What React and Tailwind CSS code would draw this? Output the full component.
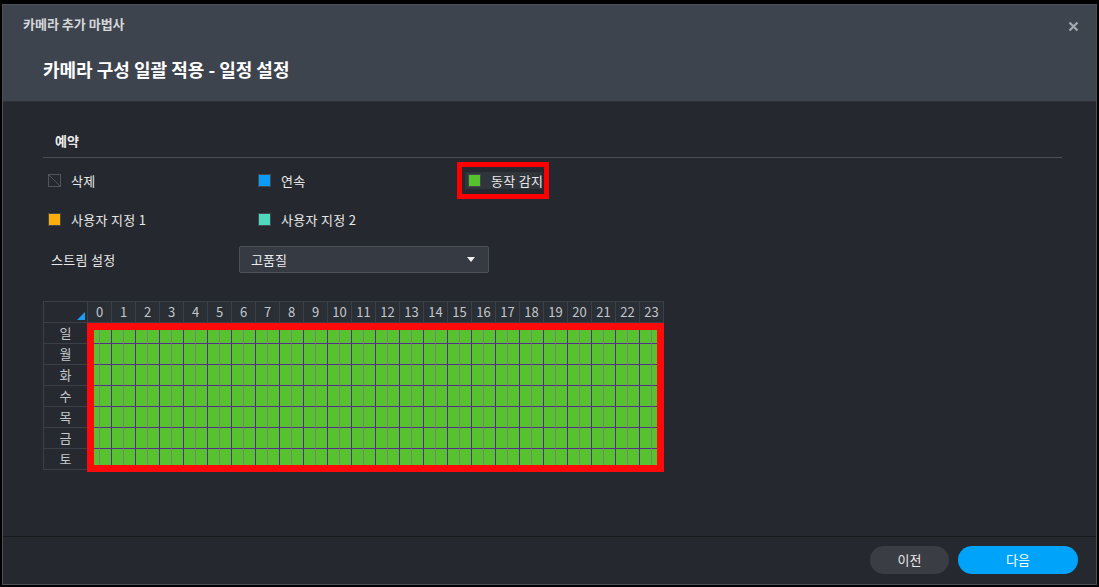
const HOURS = Array.from({ length: 24 }, (_, i) => i);
const DAYS = ['일', '월', '화', '수', '목', '금', '토'];
const HALVES = Array.from({ length: 48 }, (_, i) => i);

function LegendItem({ color, label, del, highlight }) {
  return (
    <div className={'relative flex items-center h-[17px] ml-[2px] pl-[3px] gap-[10px] ' + (highlight ? 'w-[77px] bg-[#30343b]' : '')}>
      {del ? (
        <svg width="13" height="13" viewBox="0 0 13 13" className="shrink-0">
          <rect x="0.5" y="0.5" width="12" height="12" fill="none" stroke="#50545b" />
          <line x1="1" y1="1" x2="12" y2="12" stroke="#50545b" />
        </svg>
      ) : (
        <span className={'w-[13px] h-[13px] shrink-0 border border-[#44474e] ' + color} />
      )}
      <span className="text-[13px] tracking-[0.3px] text-[#e8e8e8] whitespace-nowrap overflow-hidden">{label}</span>
      {highlight && <div className="absolute left-[-8px] top-[-10px] w-[92px] h-[37px] border-[5px] border-[#ff0000]" />}
    </div>
  );
}

export default function App() {
  return (
    <div className="w-[1099px] h-[587px] bg-black pt-[4px] px-[2px] font-['Noto_Sans_CJK_KR','Noto_Sans',sans-serif]">
      <div className="h-[581px] border border-[#4b4f57] bg-[#25282e] flex flex-col">
        {/* header */}
        <div className="h-[97px] bg-[#3e444e] pl-[20px] pt-[10px] relative shrink-0 border-b border-[#2e3238]">
          <div className="text-[13px] leading-[18px] font-bold text-[#d4d6da]">카메라 추가 마법사</div>
          <div className="mt-[24px] pl-[20px] text-[18px] leading-[24px] font-bold text-white">카메라 구성 일괄 적용 - 일정 설정</div>
          <svg className="absolute right-[17px] top-[16px]" width="11" height="11" viewBox="0 0 11 11">
            <path d="M1.5 1.5 L9.5 9.5 M9.5 1.5 L1.5 9.5" stroke="#a5a9b0" strokeWidth="2.2" />
          </svg>
        </div>

        {/* body */}
        <div className="flex-1 pl-[40px] pr-[34px] pt-[23px] border-b border-[#18191d]">
          <div className="h-[33px] flex items-center pl-[12px] border-b border-[#4a4e55] pb-[1px]">
            <span className="text-[13px] font-bold text-[#ececec]">예약</span>
          </div>

          <div className="mt-[3px] grid grid-cols-[210px_210px_210px]">
            <div className="h-[39px] flex items-center"><LegendItem del label="삭제" /></div>
            <div className="h-[39px] flex items-center"><LegendItem color="bg-[#0a9df5]" label="연속" /></div>
            <div className="h-[39px] flex items-center"><LegendItem color="bg-[#55c12d]" label="동작 감지" highlight /></div>
            <div className="h-[39px] flex items-center"><LegendItem color="bg-[#ffad0a]" label="사용자 지정 1" /></div>
            <div className="h-[39px] flex items-center"><LegendItem color="bg-[#4fd8be]" label="사용자 지정 2" /></div>
          </div>

          <div className="mt-[7px] flex items-center h-[27px]">
            <span className="w-[196px] pl-[8px] text-[13px] tracking-[0.3px] text-[#e8e8e8]">스트림 설정</span>
            <div className="w-[250px] h-[27px] bg-[#353a43] border border-[#4b5059] rounded-[2px] flex items-center justify-between pl-[11px] pr-[13px]">
              <span className="text-[13px] text-[#ececec]">고품질</span>
              <svg width="8" height="5" viewBox="0 0 8 5"><path d="M0 0 H8 L4 5 Z" fill="#f0f0f0" /></svg>
            </div>
          </div>

          {/* schedule grid */}
          <div className="mt-[28px] relative w-fit border-l border-t border-[#3b4048]">
            <div className="flex">
              <div className="relative w-[44px] h-[21px] border-r border-b border-[#3b4048] bg-[#262a30]">
                <svg className="absolute right-[2px] bottom-[2px]" width="8" height="8" viewBox="0 0 8 8"><path d="M8 0 V8 H0 Z" fill="#1a9ef5" /></svg>
              </div>
              {HOURS.map(h => (
                <div key={h} className="w-[24px] h-[21px] border-r border-b border-[#3b4048] bg-[#2a2e35] flex items-center justify-center text-[13px] text-[#c4c7cc]">{h}</div>
              ))}
            </div>
            {DAYS.map(d => (
              <div key={d} className="flex">
                <div className="w-[44px] h-[21px] border-r border-b border-[#3b4048] bg-[#262a30] flex items-center justify-center text-[13px] text-[#c4c7cc]">{d}</div>
                {HALVES.map(i => (
                  <div key={i} className={'w-[12px] h-[21px] bg-[#56c22e] border-b border-[#5a2a8c] border-r ' + (i % 2 ? 'border-r-[#5a2a8c]' : 'border-r-[#7c8678]')} />
                ))}
              </div>
            ))}
            <div className="absolute left-[43px] top-[21px] w-[577px] h-[149px] border-[7px] border-[#ff0a0a]" />
          </div>
        </div>

        {/* footer */}
        <div className="h-[47px] shrink-0 flex items-start justify-end gap-[9px] pt-[9px] pr-[18px]">
          <button className="w-[79px] h-[28px] rounded-full bg-[#3a3d44] text-[13px] text-[#e8e8e8]">이전</button>
          <button className="w-[120px] h-[28px] rounded-full bg-[#00a3fa] text-[13px] text-white">다음</button>
        </div>
      </div>
    </div>
  );
}
